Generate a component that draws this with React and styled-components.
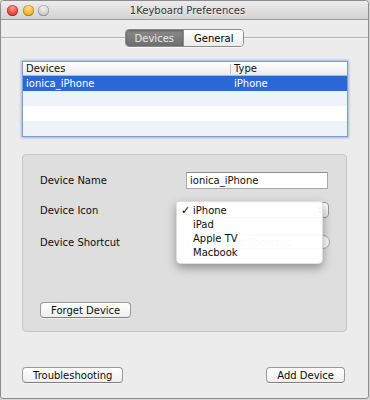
import React from "react";
import styled, { createGlobalStyle } from "styled-components";

const Global = createGlobalStyle`
  html, body { margin: 0; padding: 0; background: #d6d6d6; }
  body { font-family: "DejaVu Sans", "Liberation Sans", sans-serif; font-size: 10px; color: #111; }
  * { box-sizing: border-box; }
`;

const Window = styled.div`
  width: 369px;
  height: 399px;
  border: 1px solid #8c8c8c;
  border-radius: 4px 4px 3px 3px;
  background: #ececec;
  display: flex;
  flex-direction: column;
  overflow: hidden;
`;

const TitleBar = styled.div`
  height: 19px;
  flex: none;
  display: grid;
  grid-template-columns: 1fr auto 1fr;
  align-items: center;
  padding: 0 0 0 6px;
  background: linear-gradient(#ececec, #d3d3d3);
  border-bottom: 1px solid #9d9d9d;
`;

const Lights = styled.div`
  display: flex;
  gap: 4.5px;
  align-items: center;
`;

const Light = styled.span`
  width: 11px;
  height: 11px;
  border-radius: 50%;
  background: ${(p) => p.$bg};
  box-shadow: inset 0 0 0 0.5px rgba(0, 0, 0, 0.35);
`;

const Title = styled.div`
  font-size: 10px;
  color: #333;
  text-shadow: 0 1px 0 rgba(255, 255, 255, 0.6);
  white-space: nowrap;
`;

const TabStrip = styled.div`
  display: flex;
  align-items: center;
  margin-top: 9px;
  height: 18px;
  flex: none;
`;

const Rule = styled.div`
  flex: 1;
  height: 1px;
  background: #b1b1b1;
  border-bottom: 1px solid #f6f6f6;
  box-sizing: content-box;
`;

const Segmented = styled.div`
  display: flex;
  height: 18px;
  border: 1px solid #8b8b8b;
  border-radius: 4px;
  overflow: hidden;
  box-shadow: 0 1px 0 rgba(255, 255, 255, 0.7);
`;

const Segment = styled.div`
  display: flex;
  align-items: center;
  padding: 0 ${(p) => (p.$wide ? 10 : 9)}px;
  font-size: 10px;
  color: ${(p) => (p.$active ? "#e9e9e9" : "#000")};
  background: ${(p) =>
    p.$active
      ? "linear-gradient(#8a8a8a, #6e6e6e)"
      : "linear-gradient(#ffffff, #ececec)"};
  box-shadow: ${(p) => (p.$active ? "inset 0 1px 2px rgba(0,0,0,0.35)" : "none")};
  & + & { border-left: 1px solid #8b8b8b; }
`;

const Content = styled.div`
  flex: 1;
  display: flex;
  flex-direction: column;
  padding: 14px 20px 0 21px;
`;

const Table = styled.div`
  height: 76px;
  border: 1px solid #7e9ccd;
  box-shadow: 0 0 2px 1px rgba(110, 150, 220, 0.6);
  background: #fff;
  display: flex;
  flex-direction: column;
`;

const HeaderRow = styled.div`
  display: grid;
  grid-template-columns: 207px 1fr;
  height: 14px;
  flex: none;
  background: linear-gradient(#ffffff, #ececec);
  border-bottom: 1px solid #b8b8b8;
  align-items: center;
`;

const HeaderCell = styled.div`
  padding-left: 3px;
  font-size: 10px;
  color: #111;
  line-height: 10px;
  border-left: ${(p) => (p.$divided ? "1px solid #c4c4c4" : "none")};
`;

const Row = styled.div`
  display: grid;
  grid-template-columns: 207px 1fr;
  height: 15px;
  flex: none;
  align-items: center;
  background: ${(p) => (p.$selected ? "#2b68d6" : p.$alt ? "#eff3f9" : "#ffffff")};
  color: ${(p) => (p.$selected ? "#fff" : "#111")};
`;

const Cell = styled.div`
  padding-left: ${(p) => (p.$second ? 4 : 3)}px;
  font-size: 10px;
`;

const Group = styled.div`
  margin-top: 17px;
  height: 178px;
  width: 325px;
  border: 1px solid #c7c7c7;
  border-radius: 4px;
  background: #dedede;
  padding: 16px 18px 13px 17px;
  display: flex;
  flex-direction: column;
`;

const FormRow = styled.div`
  display: grid;
  grid-template-columns: 146px auto;
  align-items: center;
  height: 18px;
  margin-top: ${(p) => p.$gap || 0}px;
`;

const Label = styled.div`
  font-size: 10px;
  color: #0d0d0d;
`;

const TextField = styled.div`
  width: 142px;
  height: 17px;
  background: #fff;
  border: 1px solid #a9a9a9;
  border-top-color: #8c8c8c;
  padding: 0 3px;
  display: flex;
  align-items: center;
  font-size: 10px;
  color: #111;
`;

const PopupWrap = styled.div`
  position: relative;
  width: 143px;
  height: 16px;
`;

const Popup = styled.div`
  height: 16px;
  border: 1px solid #999;
  border-radius: 4px;
  background: linear-gradient(#fff, #ececec);
  display: flex;
  align-items: center;
  justify-content: space-between;
  padding: 0 4px 0 8px;
  font-size: 10px;
`;

const Recorder = styled.div`
  width: 144px;
  height: 14px;
  border: 1px solid #aaa;
  border-radius: 7px;
  background: #fafafa;
  display: flex;
  align-items: center;
  padding-left: 23px;
  font-size: 10px;
  color: #777;
`;

const Menu = styled.div`
  position: absolute;
  left: -10px;
  top: -1px;
  width: 147px;
  padding: 1px 0 4px;
  background: rgba(255, 255, 255, 0.95);
  border: 1px solid rgba(0, 0, 0, 0.12);
  border-radius: 3px 3px 5px 5px;
  box-shadow: 0 4px 10px rgba(0, 0, 0, 0.35);
  z-index: 2;
`;

const MenuItem = styled.div`
  display: grid;
  grid-template-columns: 12px auto;
  align-items: center;
  height: 14px;
  padding-left: 4px;
  font-size: 10px;
  color: #0d0d0d;
`;

const Check = styled.span`
  font-size: 11px;
  color: #000;
`;

const Button = styled.div`
  height: 16px;
  padding: 0 10px;
  border: 1px solid #9a9a9a;
  border-bottom-color: #7f7f7f;
  border-radius: 4px;
  background: linear-gradient(#ffffff, #efefef);
  box-shadow: 0 1px 0 rgba(255, 255, 255, 0.5);
  display: inline-flex;
  align-items: center;
  font-size: 10px;
  color: #0d0d0d;
  white-space: nowrap;
`;

const GroupFooter = styled.div`
  margin-top: auto;
  display: flex;
`;

const BottomBar = styled.div`
  margin-top: 35px;
  display: flex;
  justify-content: space-between;
  padding-right: 3px;
`;

const Arrows = () => (
  <svg width="7" height="10" viewBox="0 0 7 10">
    <path d="M1 4 L3.5 1 L6 4 Z M1 6 L3.5 9 L6 6 Z" fill="#333" />
  </svg>
);

export default function App() {
  return (
    <>
      <Global />
      <Window>
        <TitleBar>
          <Lights>
            <Light $bg="radial-gradient(circle at 50% 30%, #ff9b94, #e7423a 60%, #b3261f)" />
            <Light $bg="radial-gradient(circle at 50% 30%, #ffe08a, #f3b42a 60%, #c9860c)" />
            <Light $bg="radial-gradient(circle at 50% 30%, #f2f2f2, #cfcfcf 60%, #a9a9a9)" />
          </Lights>
          <Title>1Keyboard Preferences</Title>
          <div />
        </TitleBar>
        <TabStrip>
          <Rule />
          <Segmented>
            <Segment $active>Devices</Segment>
            <Segment $wide>General</Segment>
          </Segmented>
          <Rule />
        </TabStrip>
        <Content>
          <Table>
            <HeaderRow>
              <HeaderCell>Devices</HeaderCell>
              <HeaderCell $divided>Type</HeaderCell>
            </HeaderRow>
            <Row $selected>
              <Cell>ionica_iPhone</Cell>
              <Cell $second>iPhone</Cell>
            </Row>
            <Row $alt />
            <Row />
            <Row $alt />
          </Table>
          <Group>
            <FormRow>
              <Label>Device Name</Label>
              <TextField>ionica_iPhone</TextField>
            </FormRow>
            <FormRow $gap={12}>
              <Label>Device Icon</Label>
              <PopupWrap>
                <Popup>
                  <span>iPhone</span>
                  <Arrows />
                </Popup>
                <Menu>
                  <MenuItem>
                    <Check>✓</Check>
                    <span>iPhone</span>
                  </MenuItem>
                  <MenuItem>
                    <span />
                    <span>iPad</span>
                  </MenuItem>
                  <MenuItem>
                    <span />
                    <span>Apple TV</span>
                  </MenuItem>
                  <MenuItem>
                    <span />
                    <span>Macbook</span>
                  </MenuItem>
                </Menu>
              </PopupWrap>
            </FormRow>
            <FormRow $gap={14}>
              <Label>Device Shortcut</Label>
              <Recorder>Record Shortcut</Recorder>
            </FormRow>
            <GroupFooter>
              <Button>Forget Device</Button>
            </GroupFooter>
          </Group>
          <BottomBar>
            <Button>Troubleshooting</Button>
            <Button>Add Device</Button>
          </BottomBar>
        </Content>
      </Window>
    </>
  );
}
